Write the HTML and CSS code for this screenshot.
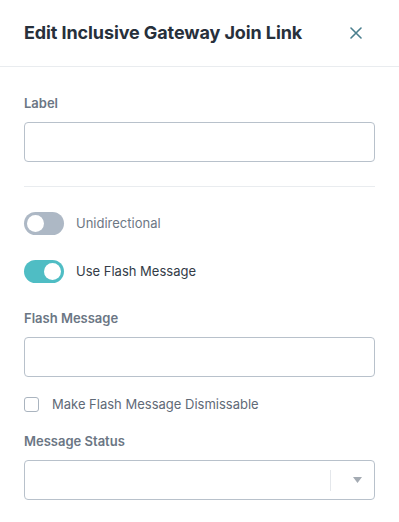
FILE: index.html
```html
<!DOCTYPE html>
<html>
<head>
<meta charset="utf-8">
<link rel="stylesheet" href="styles.css">
</head>
<body>
<div class="panel">
  <header class="header">
    <h1 class="title">Edit Inclusive Gateway Join Link</h1>
    <button class="close" aria-label="Close">
      <svg width="12" height="12" viewBox="0 0 12 12"><path d="M1 1L11 11M11 1L1 11" stroke="#4a7f8e" stroke-width="1.6" fill="none" stroke-linecap="round"/></svg>
    </button>
  </header>
  <div class="body">
    <div class="field">
      <label class="label">Label</label>
      <div class="input"></div>
    </div>
    <hr class="divider">
    <div class="toggles">
      <div class="toggle-row">
        <span class="switch"><span class="knob"></span></span>
        <span class="toggle-text muted">Unidirectional</span>
      </div>
      <div class="toggle-row">
        <span class="switch on"><span class="knob"></span></span>
        <span class="toggle-text">Use Flash Message</span>
      </div>
    </div>
    <div class="field flash">
      <label class="label">Flash Message</label>
      <div class="input"></div>
    </div>
    <div class="check-row">
      <span class="checkbox"></span>
      <span class="check-text">Make Flash Message Dismissable</span>
    </div>
    <div class="field status">
      <label class="label">Message Status</label>
      <div class="input select">
        <span class="sep"></span>
        <svg class="arrow" width="9" height="6" viewBox="0 0 9 6"><path d="M0 0H9L4.5 6Z" fill="#a4abb3"/></svg>
      </div>
    </div>
  </div>
</div>
</body>
</html>
```
FILE: styles.css
```css
* { box-sizing: border-box; }
html, body { margin: 0; padding: 0; background: #fff; }
body { font-family: Inter, "Noto Sans", sans-serif; }
.panel { width: 399px; }
.header {
  height: 67px;
  border-bottom: 1px solid #e9ecef;
  display: flex;
  align-items: center;
  justify-content: space-between;
  padding: 0 37px 0 24px;
}
.title {
  margin: 0;
  font-size: 18px;
  font-weight: 700;
  color: #27303b;
  line-height: 24px;
  letter-spacing: -0.1px;
}
.close {
  border: 0; background: none; padding: 0; margin: 0;
  width: 12px; height: 12px; display: flex;
}
.body { padding: 26px 24px 0 24px; }
.field { display: flex; flex-direction: column; }
.label {
  font-size: 13px;
  font-weight: 600;
  line-height: 20px;
  color: #6b7684;
  margin-bottom: 9px;
}
.input {
  height: 40px;
  border: 1px solid #b8c1cb;
  border-radius: 4px;
  background: #fff;
}
.divider {
  border: 0;
  border-top: 1px solid #e9ecef;
  margin: 24px 0 24px 0;
}
.toggles { display: flex; flex-direction: column; gap: 24px; }
.toggle-row { display: flex; align-items: center; height: 24px; gap: 12px; }
.switch {
  width: 40px; height: 23px;
  border-radius: 12px;
  background: #adb8c5;
  display: flex; align-items: center;
  padding: 0 3px;
}
.switch.on { background: #4fbdc4; justify-content: flex-end; }
.knob { width: 17px; height: 17px; border-radius: 50%; background: #fff; }
.toggle-text { font-size: 13px; color: #333c47; line-height: 20px; }
.toggle-text.muted { color: #6d7784; }
.flash { margin-top: 25px; }
.check-row { display: flex; align-items: center; height: 20px; margin-top: 17px; }
.checkbox {
  width: 15px; height: 15px;
  border: 1.5px solid #aab4bf;
  border-radius: 3px;
  margin-right: 13px;
}
.check-text { font-size: 13px; color: #5f6a77; line-height: 20px; }
.status { margin-top: 17px; }
.select { display: flex; align-items: center; justify-content: flex-end; padding-right: 12px; }
.sep { width: 1px; height: 21px; background: #e4e7eb; margin-right: 22px; }
.arrow { display: block; }
```
